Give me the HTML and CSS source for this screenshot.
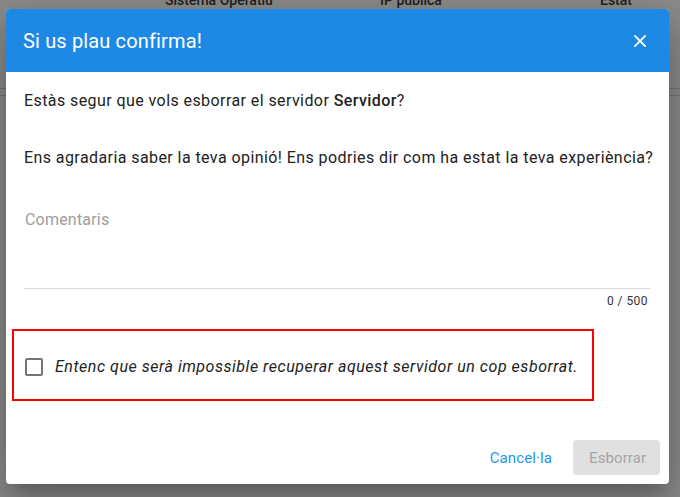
FILE: index.html
```html
<!DOCTYPE html>
<html lang="ca">
<head>
<meta charset="utf-8">
<title>Confirmació</title>
<link rel="stylesheet" href="styles.css">
</head>
<body>
<div class="page">
  <div class="table-head">
    <span class="th th-os">Sistema Operatiu</span>
    <span class="th th-ip">IP pública</span>
    <span class="th th-state">Estat</span>
  </div>
  <div class="table-rule"></div>
  <div class="table-rule second"></div>
</div>
<div class="overlay"></div>
<div class="dialog">
  <div class="dialog-header">
    <span class="dialog-title">Si us plau confirma!</span>
    <button class="close-btn" aria-label="Tanca">
      <svg width="12" height="12" viewBox="0 0 12 12"><path d="M1 1L11 11M11 1L1 11" stroke="#fff" stroke-width="1.8" stroke-linecap="square"/></svg>
    </button>
  </div>
  <div class="dialog-body">
    <p class="line first">Estàs segur que vols esborrar el servidor <strong>Servidor</strong>?</p>
    <p class="line second">Ens agradaria saber la teva opinió! Ens podries dir com ha estat la teva experiència?</p>
    <div class="field">
      <div class="field-input">
        <span class="field-label">Comentaris</span>
      </div>
      <div class="counter">0 / 500</div>
    </div>
    <label class="confirm-box">
      <span class="checkbox"></span>
      <span class="confirm-text">Entenc que serà impossible recuperar aquest servidor un cop esborrat.</span>
    </label>
  </div>
  <div class="dialog-actions">
    <button class="btn btn-text">Cancel·la</button>
    <button class="btn btn-disabled">Esborrar</button>
  </div>
</div>
</body>
</html>
```
FILE: styles.css
```css
html, body {
  margin: 0;
  padding: 0;
}
body {
  width: 680px;
  height: 497px;
  overflow: hidden;
  position: relative;
  font-family: Roboto, "Noto Sans", sans-serif;
  background: #ffffff;
}
.page {
  height: 100%;
}
.table-head {
  display: flex;
  height: 8px;
  overflow: hidden;
  position: relative;
}
.th {
  position: absolute;
  top: -8px;
  font-size: 14px;
  font-weight: 500;
  color: #222;
}
.th-os { left: 165px; }
.th-ip { left: 380px; }
.th-state { left: 600px; }
.table-rule {
  margin-top: 80px;
  height: 1px;
  background: #ccc;
}
.table-rule.second {
  margin-top: 6px;
}
.overlay {
  position: absolute;
  inset: 0;
  background: rgba(33, 33, 33, 0.52);
}
.dialog {
  position: absolute;
  left: 6px;
  top: 9px;
  width: 663px;
  background: #fff;
  border-radius: 4px;
  overflow: hidden;
  box-shadow: 0 11px 15px -7px rgba(0,0,0,.2), 0 24px 38px 3px rgba(0,0,0,.14), 0 9px 46px 8px rgba(0,0,0,.12);
}
.dialog-header {
  height: 63px;
  background: #1e88e5;
  color: #fff;
  display: flex;
  align-items: center;
  justify-content: space-between;
  padding: 0 17px 0 17px;
}
.dialog-title {
  font-size: 20px;
  font-weight: 400;
  letter-spacing: 0.15px;
}
.close-btn {
  background: none;
  border: 0;
  padding: 0;
  width: 24px;
  height: 24px;
  display: flex;
  align-items: center;
  justify-content: center;
  margin-top: 1px;
  cursor: pointer;
}
.dialog-body {
  padding: 17px 19px 0 18px;
  color: #222;
}
.line {
  margin: 0;
  font-size: 16px;
  line-height: 24px;
  letter-spacing: 0.42px;
  white-space: nowrap;
}
.line strong {
  font-weight: 500;
}
.line.second {
  margin-top: 33px;
}
.field {
  margin-top: 38px;
}
.field-input {
  height: 80px;
  border-bottom: 1px solid #d9d9d9;
}
.field-label {
  display: block;
  font-size: 16px;
  line-height: 24px;
  letter-spacing: 0.2px;
  color: #9e9e9e;
  margin-left: 1px;
}
.counter {
  margin-top: 5px;
  text-align: right;
  font-size: 12px;
  line-height: 14px;
  letter-spacing: 0.45px;
  color: #333;
  padding-right: 2px;
}
.confirm-box {
  margin-top: 21px;
  margin-left: -12px;
  width: 582px;
  height: 72px;
  box-sizing: border-box;
  border: 2px solid #ff0000;
  display: flex;
  align-items: center;
  padding: 3px 0 0 11px;
}
.checkbox {
  width: 18px;
  height: 18px;
  box-sizing: border-box;
  border: 2px solid #757575;
  border-radius: 2px;
  flex: none;
}
.confirm-text {
  margin-left: 12px;
  font-size: 16px;
  font-style: italic;
  letter-spacing: 0.53px;
  color: #222;
}
.dialog-actions {
  display: flex;
  justify-content: flex-end;
  align-items: center;
  gap: 5px;
  padding: 39px 9px 9px 0;
}
.btn {
  height: 35px;
  border: 0;
  border-radius: 4px;
  font-family: Roboto, "Noto Sans", sans-serif;
  font-size: 15px;
  letter-spacing: 0.1px;
  padding: 0 16px;
  background: transparent;
}
.btn-text {
  color: #2196f3;
}
.btn-disabled {
  width: 87px;
  background: #e0e0e0;
  color: #a6a6a6;
}
```
